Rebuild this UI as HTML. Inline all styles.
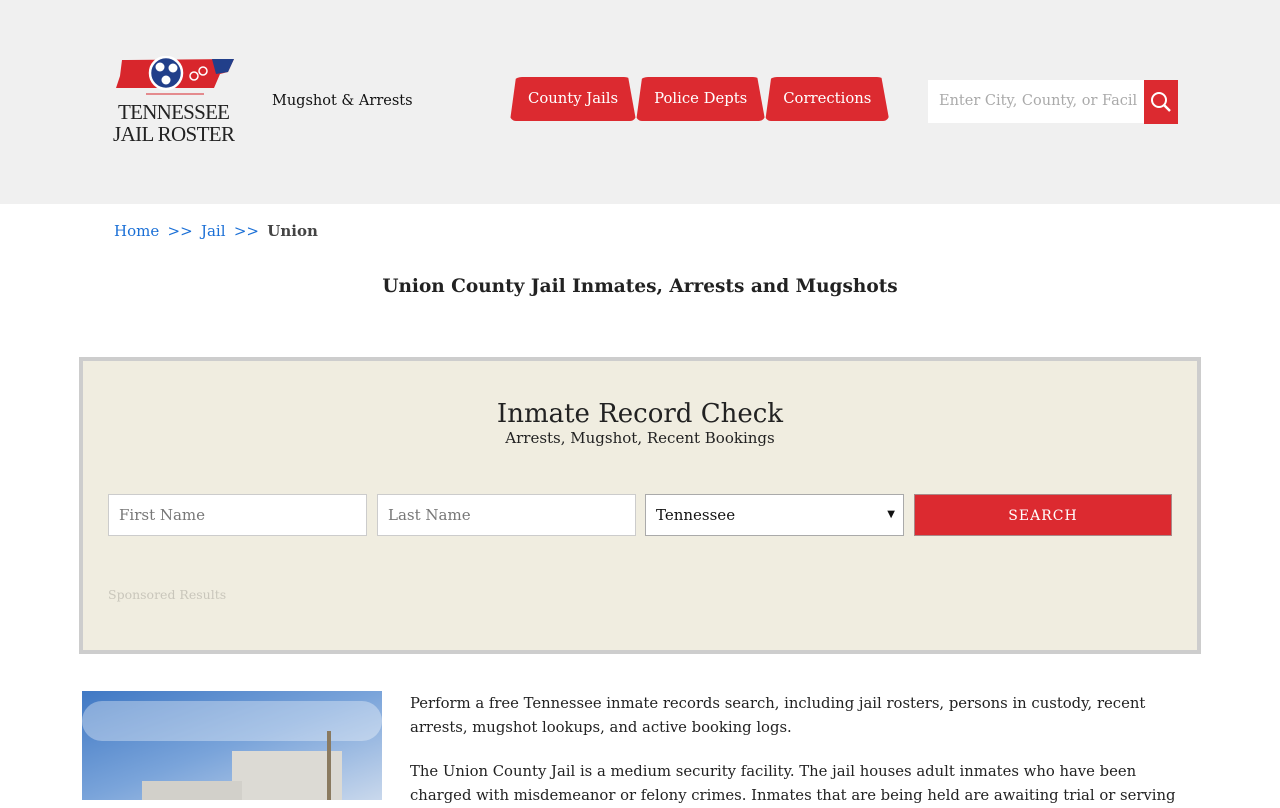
<!DOCTYPE html>
<html><head><style>
*{box-sizing:border-box;margin:0;padding:0}
body{width:1280px;height:800px;overflow:hidden;background:#fff;font-family:"DejaVu Serif","Liberation Serif",serif;color:#222}
.hdr{height:204px;background:#f0f0f0;position:relative}
.tag{position:absolute;left:272px;top:93px;font-size:14.5px;color:#111}
.nav{position:absolute;top:77px;left:510px;display:flex}
.nav div{height:44px;background:#dc2a30;color:#fff;font-size:14.8px;line-height:44px;padding:0 18px;border-radius:12px 12px 6px 6px;clip-path:polygon(6px 0,calc(100% - 8px) 0,100% 100%,0 100%);margin-right:0}
.srch{position:absolute;left:928px;top:80px;width:216px;height:43px;background:#fff;color:#aaa;font-size:14.5px;line-height:43px;padding-left:11px;white-space:nowrap;overflow:hidden}
.sbtn{position:absolute;left:1144px;top:80px;width:34px;height:44px;background:#dc2a30}
.bc{position:absolute;top:222px;left:114px;font-size:15px;color:#1a6fd6;word-spacing:-2px}
.bc b{color:#444;font-weight:600}
h1{position:absolute;top:276px;width:1280px;text-align:center;font-size:18.5px;font-weight:bold;color:#222}
.box{position:absolute;left:79px;top:357px;width:1122px;height:297px;background:#f0ede0;border:4px solid #cdcdcd}
.box h2{text-align:center;font-weight:normal;font-size:26px;margin-top:38px;color:#222}
.box p.s{text-align:center;font-size:15px;margin-top:0}
.in{position:absolute;top:133px;height:42px;width:259px;background:#fff;border:1px solid #ccc;font-size:15px;color:#777;line-height:40px;padding-left:10px}
.btn{position:absolute;top:133px;left:831px;width:258px;height:42px;background:#dc2a30;border:1px solid #a88;color:#fff;text-align:center;line-height:42px;font-size:14px;letter-spacing:1px}
.sp{position:absolute;left:25px;top:226px;font-size:12.5px;color:#c9c6bb}
.img{position:absolute;left:82px;top:691px;width:300px;height:109px;overflow:hidden;background:linear-gradient(160deg,#3f78c4,#7aa4da 50%,#c9d8ec)}
.txt{position:absolute;left:410px;top:692px;width:780px;font-size:14.8px;line-height:24px;color:#222}
</style></head><body>
<div class="hdr">
<svg style="position:absolute;left:110px;top:56px" width="130" height="92" viewBox="0 0 130 92">
<polygon points="12,4 124,3 118,16 110,18 104,32 6,32 10,20" fill="#d8262c"/>
<polygon points="102,3 124,3 118,16 106,18" fill="#213f8a"/>
<circle cx="56" cy="17" r="16" fill="#213f8a" stroke="#fff" stroke-width="2.5"/>
<circle cx="50" cy="11" r="4.5" fill="#fff"/><circle cx="63" cy="12" r="4.5" fill="#fff"/><circle cx="56" cy="24" r="4.5" fill="#fff"/>
<circle cx="84" cy="20" r="4" stroke="#fff" stroke-width="1.5" fill="none"/><circle cx="93" cy="15" r="4" stroke="#fff" stroke-width="1.5" fill="none"/>
<line x1="36" y1="38" x2="94" y2="38" stroke="#d8262c" stroke-width="1"/>
<text x="64" y="63" font-family="Liberation Serif" font-size="21" text-anchor="middle" fill="#222" textLength="112">TENNESSEE</text>
<text x="64" y="85" font-family="Liberation Serif" font-size="21" text-anchor="middle" fill="#222" textLength="122">JAIL ROSTER</text>
</svg>
<div class="tag">Mugshot &amp; Arrests</div>
<div class="nav"><div>County Jails</div><div>Police Depts</div><div>Corrections</div></div>
<div class="srch">Enter City, County, or Facil</div>
<div class="sbtn"><svg width="34" height="44"><circle cx="15" cy="20" r="7" stroke="#fff" stroke-width="2" fill="none"/><line x1="20" y1="25" x2="26" y2="31" stroke="#fff" stroke-width="2.5"/></svg></div>
</div>
<div class="bc">Home &nbsp;&nbsp;&gt;&gt;&nbsp;&nbsp; Jail &nbsp;&nbsp;&gt;&gt;&nbsp;&nbsp; <b>Union</b></div>
<h1>Union County Jail Inmates, Arrests and Mugshots</h1>
<div class="box">
<h2>Inmate Record Check</h2>
<p class="s">Arrests, Mugshot, Recent Bookings</p>
<div class="in" style="left:25px">First Name</div>
<div class="in" style="left:294px">Last Name</div>
<div class="in" style="left:562px;color:#111;border-color:#aaa">Tennessee<span style="position:absolute;right:8px;font-size:10px">&#9660;</span></div>
<div class="btn">SEARCH</div>
<div class="sp">Sponsored Results</div>
</div>
<div class="img">
<div style="position:absolute;left:0;top:10px;width:300px;height:40px;background:rgba(255,255,255,.35);border-radius:20px"></div>
<div style="position:absolute;left:150px;top:60px;width:110px;height:49px;background:#dcdad4"></div>
<div style="position:absolute;left:60px;top:90px;width:100px;height:19px;background:#d2d0ca"></div>
<div style="position:absolute;left:245px;top:40px;width:4px;height:69px;background:#8a7a60"></div>
</div>
<div class="txt"><p>Perform a free Tennessee inmate records search, including jail rosters, persons in custody, recent arrests, mugshot lookups, and active booking logs.</p><p style="margin-top:20px">The Union County Jail is a medium security facility. The jail houses adult inmates who have been charged with misdemeanor or felony crimes. Inmates that are being held are awaiting trial or serving</p></div>
</body></html>
